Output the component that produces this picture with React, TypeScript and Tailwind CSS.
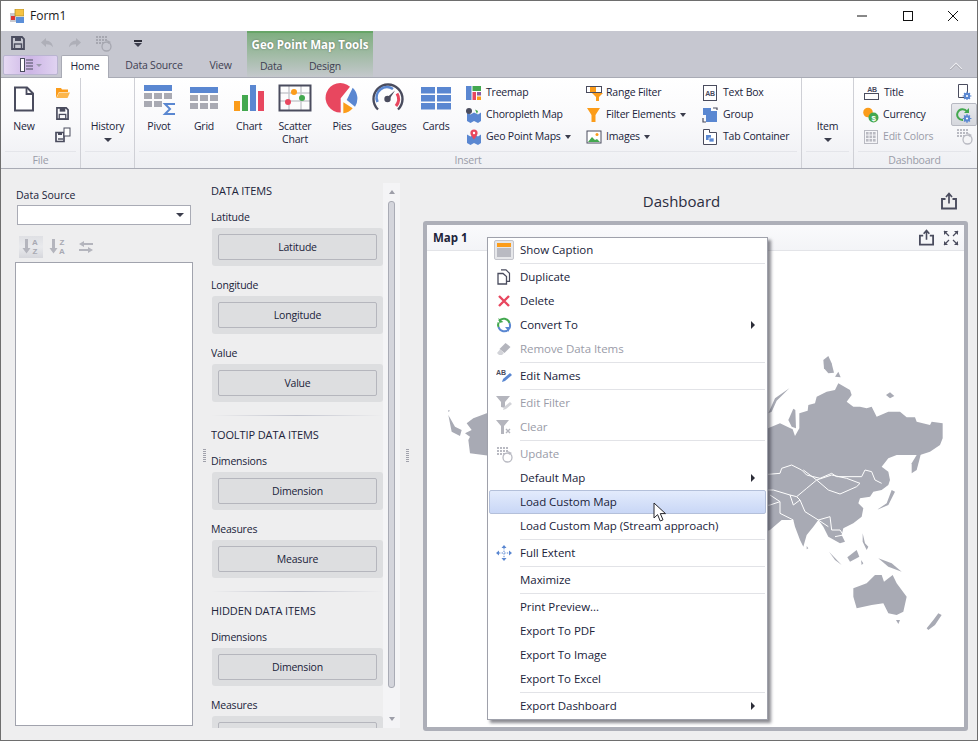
import React from "react";

const D = "#4a4c5e";
const BL = "#5a87d1";
const OR = "#fb9c1a";
const GR = "#43a84f";
const RD = "#e8475f";

type SP = { children: React.ReactNode; w?: number; h?: number; vb?: string; className?: string };
const S = ({ children, w = 16, h = 16, vb, className }: SP) => (
  <svg width={w} height={h} viewBox={vb ?? `0 0 ${w} ${h}`} className={"block shrink-0 " + (className ?? "")}>{children}</svg>
);

const Save = ({ c = D, s = 14 }: { c?: string; s?: number }) => (
  <S w={s} h={s} vb="0 0 14 14">
    <path d="M1 1h10l2 2v10H1z" fill="none" stroke={c} strokeWidth="1.8" />
    <rect x="4" y="1" width="6" height="4" fill={c} />
    <rect x="3.5" y="8" width="7" height="5" fill="none" stroke={c} strokeWidth="1.4" />
  </S>
);
const Update = ({ c = "#b9bac2", bg = "#f5f5f7" }: { c?: string; bg?: string }) => (
  <S w={17} h={17}>
    {[1, 4, 7, 10].map((x) => [1, 4, 7].map((y) => <rect key={x + "-" + y} x={x} y={y} width="2" height="2" fill={c} />))}
    <circle cx="11.5" cy="11.5" r="4.5" stroke={c} strokeWidth="1.3" fill={bg} />
    <path d="M12 5l4 2-3 2z" fill={c} />
  </S>
);
const Export = ({ s = 18 }: { s?: number }) => (
  <S w={s} h={s} vb="0 0 18 18">
    <path d="M5.5 7H2v9.5h14V7h-3.5" fill="none" stroke={D} strokeWidth="1.9" />
    <path d="M9 11.5V2.5M6 5l3-3.5L12 5" fill="none" stroke={D} strokeWidth="1.7" />
  </S>
);
const Gear = ({ x, y }: { x: number; y: number }) => (
  <g>
    <circle cx={x} cy={y} r="3.2" fill={BL} />
    <path d={`M${x - 4.4} ${y}h8.8M${x} ${y - 4.4}v8.8M${x - 3} ${y - 3}l6 6M${x - 3} ${y + 3}l6-6`} stroke={BL} strokeWidth="1.1" />
    <circle cx={x} cy={y} r="1.1" fill="#fff" />
  </g>
);
const MapFold = ({ c = BL }: { c?: string }) => (
  <path d="M1 5.5l3.5 2 3.5-2 4 2 3-2V14l-3 2-4-2-3.5 2L1 14z" fill={c} />
);

const big: Record<string, React.ReactNode> = {
  Pivot: (
    <S w={36} h={32}>
      <rect x="3" y="2" width="28" height="6" fill={BL} />
      {[3, 13, 23].map((x) => <rect key={x} x={x} y="10" width="8" height="6" fill="#a9aab3" />)}
      {[3, 13].map((x) => <rect key={x} x={x} y="18" width="8" height="6" fill="#a9aab3" />)}
      <path d="M34 21H24l5 5-5 5h10" fill="none" stroke={BL} strokeWidth="2" />
    </S>
  ),
  Grid: (
    <S w={36} h={32}>
      <rect x="4" y="4" width="28" height="6" fill={BL} />
      {[4, 14, 24].map((x) => [12, 20].map((y) => <rect key={x + "" + y} x={x} y={y} width="8" height="6" fill="#a9aab3" />))}
    </S>
  ),
  Chart: (
    <S w={36} h={32}>
      <rect x="3" y="18" width="6" height="10" fill={OR} />
      <rect x="11" y="12" width="6" height="16" fill={GR} />
      <rect x="19" y="2" width="6" height="26" fill={BL} />
      <rect x="27" y="8" width="6" height="20" fill={RD} />
    </S>
  ),
  Scatter: (
    <S w={36} h={32}>
      <path d="M3 10h30M3 18h30M12 3v24M24 3v24" stroke="#c9cad0" strokeWidth="1.5" />
      <rect x="2.5" y="2.5" width="31" height="25" fill="none" stroke={D} strokeWidth="2" />
      <circle cx="17" cy="9" r="3" fill={OR} />
      <circle cx="25" cy="15" r="3" fill={GR} />
      <circle cx="11" cy="19" r="3" fill={RD} />
    </S>
  ),
  Pies: (
    <S w={36} h={32}>
      <path d="M16.7 15.3L26 3.7A14.7 14.7 0 1 0 16.7 29.4Z" fill={RD} />
      <path d="M22.7 17L28.7 4.7A15 15 0 0 1 31 23.7Z" fill={BL} />
      <path d="M19.3 19.3L28.7 25.3A15 15 0 0 1 19.3 30.3Z" fill={OR} />
    </S>
  ),
  Gauges: (
    <S w={36} h={32}>
      <path d="M7 26.5A14.5 14.5 0 1 1 27 26.5" fill="none" stroke={D} strokeWidth="2.4" />
      <path d="M6.5 19A10.5 10.5 0 0 1 22 6" fill="none" stroke={BL} strokeWidth="2.6" />
      <path d="M26 10.5A11 11 0 0 1 25 23" fill="none" stroke={RD} strokeWidth="3" />
      <circle cx="16.5" cy="16" r="3.2" fill={D} />
      <path d="M15.5 15L24 7.5 18 17z" fill={D} />
    </S>
  ),
  Cards: (
    <S w={36} h={32}>
      {[3, 19].map((x) => [4, 12, 20].map((y) => <rect key={x + "" + y} x={x} y={y} width="14" height="6.5" fill={BL} />))}
    </S>
  ),
};

const small: Record<string, React.ReactNode> = {
  Treemap: (
    <S>
      <rect x="0" y="1" width="5.5" height="14" fill={BL} />
      <rect x="6.5" y="1" width="8.5" height="5" fill={GR} />
      <rect x="6.5" y="7" width="3.5" height="8" fill={RD} />
      <rect x="11" y="7" width="4" height="3.5" fill="#8b5c9c" />
      <rect x="11" y="11.5" width="4" height="3.5" fill={OR} />
    </S>
  ),
  Choropleth: (
    <S>
      <MapFold />
      <circle cx="3" cy="4" r="3" fill={D} />
      <path d="M9 2.5l3 1.5-1 3z" fill={GR} />
    </S>
  ),
  Geo: (
    <S>
      <MapFold />
      <path d="M8 0.5a3.6 3.6 0 0 1 3.6 3.6C11.6 6.5 8 10.5 8 10.5S4.4 6.5 4.4 4.1A3.6 3.6 0 0 1 8 .5z" fill={RD} />
      <circle cx="8" cy="4" r="1.2" fill="#fff" />
    </S>
  ),
  Range: (
    <S w={17}>
      <rect x="0.5" y="1.5" width="15" height="6" fill="#fff" stroke={D} />
      <rect x="4" y="2" width="6" height="5" fill={OR} />
      <path d="M6 8h11l-4 4v4h-3v-4z" fill={OR} />
    </S>
  ),
  FilterEl: (
    <S>
      <path d="M1 1h13L9.5 8v7h-4V8z" fill={OR} />
    </S>
  ),
  Images: (
    <S>
      <rect x="1" y="2" width="14" height="12" fill="#fff" stroke={D} />
      <path d="M2 13l4-5 3 3 2-1 3 3z" fill={GR} />
      <circle cx="11" cy="5.5" r="1.5" fill={OR} />
    </S>
  ),
  TextBox: (
    <S>
      <rect x="1.5" y="0.5" width="13" height="15" fill="#fff" stroke={D} />
      <text x="8" y="10.5" fontSize="7" fontWeight="700" textAnchor="middle" fill={D} fontFamily="Liberation Sans, sans-serif">AB</text>
    </S>
  ),
  Group: (
    <S>
      <rect x="4" y="4" width="11" height="11" fill={BL} />
      <rect x="1" y="1" width="8" height="7" fill={BL} />
      <path d="M11 1h4v2M1 11v4h3" fill="none" stroke={D} strokeWidth="1.2" />
    </S>
  ),
  TabC: (
    <S>
      <path d="M1.5 15.5V.5h6v3h7v12z" fill="#fff" stroke={D} />
      <rect x="4" y="6" width="5" height="5" fill={BL} />
      <rect x="7" y="9" width="5" height="4" fill={BL} stroke="#fff" strokeWidth=".7" />
    </S>
  ),
  Title: (
    <S w={18}>
      <text x="9" y="6.5" fontSize="7" fontWeight="700" textAnchor="middle" fill={D} fontFamily="Liberation Sans, sans-serif">AB</text>
      <rect x="1.5" y="8.5" width="14" height="6" fill="none" stroke={D} />
    </S>
  ),
  Currency: (
    <S>
      <circle cx="5" cy="5.5" r="4.8" fill={OR} />
      <circle cx="10.5" cy="10.5" r="5" fill={GR} />
      <text x="10.5" y="13.5" fontSize="8" fontWeight="700" textAnchor="middle" fill="#fff" fontFamily="Liberation Sans, sans-serif">$</text>
    </S>
  ),
  EditColors: (
    <S>
      <rect x="1.5" y="1.5" width="13" height="13" fill="none" stroke="#b9bac2" />
      {[3, 6.5, 10].map((x) => [3, 6.5, 10].map((y) => <rect key={x + "" + y} x={x} y={y} width="2.6" height="2.6" fill="#b9bac2" />))}
    </S>
  ),
};

const menuIcons: Record<string, React.ReactNode> = {
  Duplicate: (
    <S>
      <path d="M5 .8h5l3.5 3.5v8H11" fill="none" stroke={D} strokeWidth="1.2" />
      <path d="M2 4.5h5l3.5 3v7.5H2z" fill="#fff" stroke={D} strokeWidth="1.3" />
    </S>
  ),
  Delete: (
    <S>
      <path d="M3 3l10 10M13 3L3 13" stroke={RD} strokeWidth="2.4" />
    </S>
  ),
  Convert: (
    <S>
      <path d="M13.5 6A6 6 0 0 0 3 4" fill="none" stroke={GR} strokeWidth="2" />
      <path d="M3 1v5h4z" fill={GR} transform="rotate(-12 3 4)" />
      <path d="M2.5 10A6 6 0 0 0 13 12" fill="none" stroke={BL} strokeWidth="2" />
      <path d="M13 15v-5H9z" fill={BL} />
      <path d="M2.6 5.5A6 6 0 0 0 2.5 10" fill="none" stroke={GR} strokeWidth="2" />
      <path d="M13.4 6A6 6 0 0 1 13 12" fill="none" stroke={BL} strokeWidth="2" />
    </S>
  ),
  Remove: (
    <S>
      <path d="M9.5 2l5 4-6 6-5-4z" fill="#b4b5bd" />
      <path d="M4 8.5l4 3.5-2 2H3l-2-2z" fill="#d2d3d8" />
    </S>
  ),
  Names: (
    <S>
      <text x="0" y="7" fontSize="7" fontWeight="700" fill={D} fontFamily="Liberation Sans, sans-serif">AB</text>
      <path d="M6 14l1-3 7-6 2 2-7 6z" fill={BL} />
    </S>
  ),
  EditFilter: (
    <S>
      <path d="M0 1h14L9 7v6l-4-1V7z" fill="#b4b5bd" />
      <path d="M7 15l1-3 6-5 2 2-6 5z" fill="#d2d3d8" />
    </S>
  ),
  Clear: (
    <S>
      <path d="M0 1h13L8 7v8H5V7z" fill="#b4b5bd" />
      <path d="M10 10l4 4M14 10l-4 4" stroke="#b4b5bd" strokeWidth="1.4" />
    </S>
  ),
  Update: <Update bg="#fff" />,
  Full: (
    <S>
      <path d="M8 0l2.5 3h-5zM8 16l2.5-3h-5zM0 8l3-2.5v5zM16 8l-3-2.5v5z" fill={BL} />
      <path d="M8 3v10M3 8h10" stroke={BL} strokeWidth="1" strokeDasharray="1.4 1.2" />
    </S>
  ),
};

const NARROW = "text-[10.5px] tracking-[-0.2px]";

const Cap = ({ children, disabled }: { children: React.ReactNode; disabled?: boolean }) => (
  <span className={disabled ? "text-[#9a9ca8]" : "text-[#20233a]"}>{children}</span>
);

const Arrow = ({ className = "" }: { className?: string }) => (
  <span className={"inline-block w-0 h-0 border-l-[4px] border-r-[4px] border-t-[4px] border-l-transparent border-r-transparent border-t-[#3b3d4c] " + className} />
);

const Group = ({ width, caption, children, last }: { width: number; caption: string; children: React.ReactNode; last?: boolean }) => (
  <div style={{ width }} className={"shrink-0 flex flex-col " + (last ? "" : "border-r border-[#cfd0d6]")}>
    <div className="flex h-[73px]">{children}</div>
    <div className="mx-1 h-px bg-[#e4e5ea]" />
    <div className="flex-1 flex items-center justify-center text-[#9a9ca8] leading-none">{caption}</div>
  </div>
);

const BigBtn = ({ w, name, label }: { w: number; name: string; label: React.ReactNode }) => (
  <div style={{ width: w }} className="shrink-0 flex flex-col items-center pt-[5px]">
    {big[name]}
    <div className="mt-[5px] text-center leading-[13px] text-[#20233a]">{label}</div>
  </div>
);

const DropBtn = ({ label }: { label: string }) => (
  <div className="flex-1 flex flex-col items-center pt-[41px]">
    <div className="leading-[14px] text-[#20233a]">{label}</div>
    <Arrow className="mt-[5px]" />
  </div>
);

const Small = ({ icon, label, gap = 5, drop, disabled }: { icon: React.ReactNode; label: string; gap?: number; drop?: boolean; disabled?: boolean }) => (
  <div className="h-[22px] flex items-center whitespace-nowrap" style={{ gap }}>
    {icon}
    <Cap disabled={disabled}>{label}</Cap>
    {drop && (
      <span className="inline-block w-0 h-0 border-l-[3.5px] border-r-[3.5px] border-t-[4px] border-l-transparent border-r-transparent border-t-[#3b3d4c]" />
    )}
  </div>
);

const SmallCol = ({ w, ml = 0, children }: { w: number; ml?: number; children: React.ReactNode }) => (
  <div style={{ width: w, marginLeft: ml }} className="shrink-0 pt-[4px] flex flex-col">{children}</div>
);

const Tab = ({ children, w }: { children: React.ReactNode; w: number }) => (
  <div style={{ width: w }} className={"shrink-0 h-full flex items-center justify-center text-[#3f4153] whitespace-nowrap " + NARROW}>{children}</div>
);

const Header = () => (
  <div className="h-[47px] bg-[#c6c7d0] flex shrink-0 border-b border-[#a9abb5]">
    <div className="w-[246px] shrink-0 flex flex-col">
      <div className="h-[25px] flex items-center pl-[10px]">
        <Save />
        <S w={14} h={12} vb="0 0 14 12" className="ml-[15px]"><path d="M6 1L1 5.5 6 10V7.3c3 0 5 .6 7 3-.5-4-3-6.5-7-6.7z" fill="#aeafb8" /></S>
        <S w={14} h={12} vb="0 0 14 12" className="ml-[14px]"><path d="M8 1l5 4.5L8 10V7.3c-3 0-5 .6-7 3 .5-4 3-6.5 7-6.7z" fill="#aeafb8" /></S>
        <div className="ml-[13px]"><Update c="#a6a7b0" bg="#c6c7d0" /></div>
        <div className="ml-[22px] flex flex-col items-center gap-[1px]">
          <div className="w-[8px] h-[2px] bg-[#2c2d38]" />
          <Arrow />
        </div>
      </div>
      <div className="flex-1 flex items-start">
        <div className="ml-[2px] w-[55px] h-[20px] rounded-[2px] border border-[#b9b4d0] bg-gradient-to-r from-[#e6d9f3] via-[#cdb6e6] to-[#e0d3f1] flex items-center justify-center">
          <S w={14} h={14}>
            <rect x=".5" y=".5" width="4" height="13" fill="#fff" stroke={D} />
            <path d="M6 2h7M6 5h7M6 8h7M6 11h7" stroke={D} strokeWidth="1.2" />
          </S>
          <span className="ml-[2px] inline-block w-0 h-0 border-l-[3px] border-r-[3px] border-t-[3px] border-l-transparent border-r-transparent border-t-[#9c9aae]" />
        </div>
        <div className={"ml-[3px] w-[48px] h-[23px] -mb-px bg-white border border-b-0 border-[#a9abb5] rounded-t-[2px] flex items-center justify-center text-[#20233a] " + NARROW}>Home</div>
        <Tab w={90}>Data Source</Tab>
        <Tab w={43}>View</Tab>
      </div>
    </div>
    <div className="w-[126px] shrink-0 border-t-2 border-[#67a567] bg-gradient-to-b from-[#7fae80] to-[#c4c8cc] flex flex-col">
      <div className="h-[23px] flex items-center justify-center text-white font-bold whitespace-nowrap [text-shadow:0_0_2px_#5b6b5b]">Geo Point Map Tools</div>
      <div className="flex-1 flex">
        <Tab w={48}>Data</Tab>
        <Tab w={60}>Design</Tab>
      </div>
    </div>
    <div className="flex-1 flex justify-end items-end pr-[14px] pb-[6px]">
      <S w={14} h={9}>
        <path d="M1.5 7.5L7 2l5.5 5.5" fill="none" stroke="#f2f2f5" strokeWidth="2" />
        <path d="M1.5 8L7 2.5 12.5 8" fill="none" stroke="#6a6b78" strokeWidth=".8" />
      </S>
    </div>
  </div>
);

const Ribbon = () => (
  <div className={"h-[91px] shrink-0 flex bg-gradient-to-b from-white via-[#f9f9fb] to-[#eeeff3] border-b border-[#a9abb5] " + NARROW}>
    <Group width={80} caption="File">
      <div className="w-[46px] flex flex-col items-center pt-[8px]">
        <S w={22} h={26}>
          <path d="M2 1.5h12l6 6v17H2z" fill="#fff" stroke={D} strokeWidth="2" />
          <path d="M13.5 1.5v6.5h6.5" fill="none" stroke={D} strokeWidth="1.8" />
        </S>
        <div className="mt-[7px] leading-[14px] text-[#20233a]">New</div>
      </div>
      <div className="flex flex-col items-center pl-[7px] w-[24px]">
        <S w={16} h={12} className="mt-[9px]">
          <path d="M1 1h5l1 1.5h6V5H4L1 11z" fill={OR} />
          <path d="M4 5.5h11L12.5 11H1.5z" fill="#fcb64c" />
        </S>
        <div className="mt-[8px]"><Save s={13} /></div>
        <S w={16} h={16} className="mt-[7px]">
          <path d="M1 5.5h8v9H1z" fill="none" stroke={D} strokeWidth="1.7" />
          <rect x="3" y="5" width="4" height="3" fill={D} />
          <rect x="9" y="1" width="6" height="8" fill="#fff" stroke={D} />
          <path d="M3 12h5" stroke={D} strokeWidth="1.4" />
        </S>
      </div>
    </Group>
    <Group width={54} caption="">
      <DropBtn label="History" />
    </Group>
    <Group width={667} caption="Insert">
      <div className="w-[2px]" />
      <BigBtn w={44} name="Pivot" label="Pivot" />
      <BigBtn w={46} name="Grid" label="Grid" />
      <BigBtn w={44} name="Chart" label="Chart" />
      <BigBtn w={48} name="Scatter" label={<>Scatter<br />Chart</>} />
      <BigBtn w={46} name="Pies" label="Pies" />
      <BigBtn w={48} name="Gauges" label="Gauges" />
      <BigBtn w={46} name="Cards" label="Cards" />
      <SmallCol w={120} ml={7}>
        <Small icon={small.Treemap} label="Treemap" gap={4} />
        <Small icon={small.Choropleth} label="Choropleth Map" gap={4} />
        <Small icon={small.Geo} label="Geo Point Maps" gap={4} drop />
      </SmallCol>
      <SmallCol w={116}>
        <Small icon={small.Range} label="Range Filter" gap={3} />
        <Small icon={small.FilterEl} label="Filter Elements" gap={4} drop />
        <Small icon={small.Images} label="Images" gap={4} drop />
      </SmallCol>
      <SmallCol w={90}>
        <Small icon={small.TextBox} label="Text Box" gap={5} />
        <Small icon={small.Group} label="Group" gap={5} />
        <Small icon={small.TabC} label="Tab Container" gap={5} />
      </SmallCol>
    </Group>
    <Group width={52} caption="">
      <DropBtn label="Item" />
    </Group>
    <Group width={121} caption="Dashboard" last>
      <SmallCol w={89} ml={9}>
        <Small icon={small.Title} label="Title" gap={3} />
        <Small icon={small.Currency} label="Currency" gap={4} />
        <Small icon={small.EditColors} label="Edit Colors" gap={4} disabled />
      </SmallCol>
      <div className="w-[26px] ml-[-1px] pt-[3px] flex flex-col items-center">
        <div className="h-[22px] flex items-center">
          <S>
            <path d="M2.5.5h9v13h-9z" fill="#fff" stroke={D} />
            <Gear x={11} y={12} />
          </S>
        </div>
        <div className="h-[23px] w-[26px] rounded-[2px] border border-[#b7b9c2] bg-gradient-to-b from-[#e8e9ed] to-[#d5d7dd] flex items-center justify-center">
          <S>
            <path d="M11 4.5A5.4 5.4 0 1 0 7 13" fill="none" stroke={GR} strokeWidth="2" />
            <path d="M13 1v5H8z" fill={GR} />
            <Gear x={11} y={11.5} />
          </S>
        </div>
        <div className="h-[21px] flex items-center"><Update /></div>
      </div>
    </Group>
  </div>
);

const Splitter = ({ w }: { w: number }) => (
  <div style={{ width: w }} className="shrink-0 flex items-start justify-center pt-[279px]">
    <div className="w-[3px] h-[14px] bg-[repeating-linear-gradient(0deg,#a0a1ab_0,#a0a1ab_1px,transparent_1px,transparent_2px)]" />
  </div>
);

const SortIcon = ({ top, bottom }: { top: string; bottom: string }) => (
  <S w={18} h={18}>
    <path d="M3 1h3v9h2.5L4.5 15.5.5 10H3z" fill="#b4b5bd" />
    <text x="13" y="7" fontSize="8" fontWeight="700" textAnchor="middle" fill="#a8a9b2" fontFamily="Liberation Sans, sans-serif">{top}</text>
    <text x="13" y="16" fontSize="8" fontWeight="700" textAnchor="middle" fill="#a8a9b2" fontFamily="Liberation Sans, sans-serif">{bottom}</text>
  </S>
);

const LeftPane = () => (
  <div className="w-[196px] shrink-0 flex flex-col pt-[19px] pl-[14px] text-[10.5px]">
    <div className="h-[14px] leading-[14px] pl-[1px] text-[#20233a]">Data Source</div>
    <div className="mt-[3px] ml-[2px] w-[174px] h-[20px] bg-white border border-[#a9abb5] flex items-center justify-end pr-[6px]">
      <Arrow />
    </div>
    <div className="mt-[11px] ml-[4px] h-[22px] flex items-center">
      <div className="w-[24px] h-[22px] bg-gradient-to-b from-[#dfe0e4] via-[#e9eaed] to-[#d6d7dc] flex items-center justify-center">
        <SortIcon top="A" bottom="Z" />
      </div>
      <div className="ml-[6px]"><SortIcon top="Z" bottom="A" /></div>
      <S w={16} h={14} className="ml-[11px]">
        <path d="M6 1L1 4l5 3V5h9V3H6zM10 7l5 3-5 3v-2H1V9h9z" fill="#b4b5bd" />
      </S>
    </div>
    <div className="mt-[4px] w-[178px] h-[464px] bg-white border border-[#a1a3ad]" />
  </div>
);

const Slot = ({ label, btn }: { label: string; btn?: string }) => (
  <div className="mb-[8px]">
    <div className="h-[22px] pt-[1px] flex items-center text-[#20233a]">{label}</div>
    <div className="h-[38px] rounded-[3px] bg-[#dddee0] ml-[1px] p-[6px]">
      <div className="h-[26px] pt-[1px] rounded-[2px] border border-[#b5b6bd] flex items-center justify-center text-[#20233a]">{btn}</div>
    </div>
  </div>
);

const SectionHead = ({ children, sep }: { children: string; sep?: boolean }) => (
  <>
    {sep && <div className="mt-[13px] mb-[8px] h-px bg-gradient-to-r from-transparent via-[#c3c5cf] to-transparent" />}
    <div className="h-[22px] mb-[4px] flex items-center text-[#20233a] text-[11px] tracking-[-0.1px]">{children}</div>
  </>
);

const Items = () => (
  <div className={"w-[172px] shrink-0 pt-[11px] h-[559px] overflow-hidden " + NARROW}>
    <SectionHead>DATA ITEMS</SectionHead>
    <Slot label="Latitude" btn="Latitude" />
    <Slot label="Longitude" btn="Longitude" />
    <Slot label="Value" btn="Value" />
    <SectionHead sep>TOOLTIP DATA ITEMS</SectionHead>
    <Slot label="Dimensions" btn="Dimension" />
    <Slot label="Measures" btn="Measure" />
    <SectionHead sep>HIDDEN DATA ITEMS</SectionHead>
    <Slot label="Dimensions" btn="Dimension" />
    <Slot label="Measures" />
  </div>
);

const Scroll = () => (
  <div className="mt-[14px] h-[545px] w-[17px] shrink-0 bg-[#f4f4f6] flex flex-col items-center">
    <span className="mt-[7px] inline-block w-0 h-0 border-l-[3.5px] border-r-[3.5px] border-b-[4px] border-l-transparent border-r-transparent border-b-[#9d9ea8]" />
    <div className="mt-[7px] w-[7px] h-[487px] rounded-[3px] bg-[#d4d5dc] border border-[#a9abb5]" />
    <span className="mt-[29px] inline-block w-0 h-0 border-l-[3.5px] border-r-[3.5px] border-t-[4px] border-l-transparent border-r-transparent border-t-[#9d9ea8]" />
  </div>
);

const MAP_MAIN =
  "M0 745L24 745 60 730 85 742 98 748 105 768 118 745 118 700 143 692 145 675 165 670 170 650 200 635 225 630 235 610 270 630 275 645 260 665 280 680 300 680 320 685 335 680 350 710 385 695 420 695 440 712 465 712 470 725 510 735 515 725 548 730 548 775 540 795 510 815 480 825 450 825 410 825 385 835 365 860 385 875 390 900 385 915 365 930 340 935 330 950 300 955 295 970 310 985 305 1010 280 1030 250 1045 245 1065 255 1085 240 1090 205 1070 190 1040 175 1020 160 1040 140 1065 130 1100 120 1080 105 1040 100 1020 65 1020 30 1050 0 1060Z";
const MAP_ISLANDS = [
  "M190 540L205 528 215 550 222 578 205 580 192 565Z",
  "M225 590L235 575 242 592Z",
  "M378 645L390 637 403 648 390 655Z",
  "M25 700L45 655 88 625 50 662 35 695Z",
  "M85 720L100 686 106 690 108 745 95 740Z",
  "M455 850L470 825 488 800 478 840 470 870 455 880Z",
  "M350 990L380 970 395 930 405 935 385 975Z",
  "M207 1115L245 1155 225 1140Z",
  "M262 1132L290 1110 298 1130 270 1145Z",
  "M355 1135L395 1150 425 1175 385 1160Z",
  "M280 1225L320 1210 345 1185 365 1185 372 1205 398 1185 410 1210 440 1250 430 1295 410 1305 385 1300 370 1270 335 1275 290 1285 280 1250Z",
  "M408 1320L420 1320 415 1332Z",
  "M500 1345L520 1320 535 1300 545 1305 525 1335 505 1350Z",
  "M140 1098L145 1105 140 1108Z",
  "M308 1060L315 1090 325 1100 320 1110 308 1085Z",
  "M303 1140L310 1150 305 1155Z",
  "M-935 705L-915 740 -895 750 -900 768 -925 755Z",
  "M-935 690L-930 692 -935 696Z",
  "M-880 730L-860 715 -820 700 -790 700 -790 830 -870 820 -875 780 -870 770 -885 760 -865 750Z",
];
const MAP_BORDERS = [
  "M0 885L60 880 65 865 95 855 125 870 140 885 180 895 215 880 230 890 270 890 305 890 315 870 335 875 345 900 365 910",
  "M130 870L170 900 205 930 240 942 290 920 300 910 260 895 215 885 170 900 140 925 110 950 90 945 40 930 0 930",
  "M110 950L120 960 135 995 175 1020 210 1010 215 1050 240 1050",
  "M30 945L60 965 60 1000 90 1015 100 1020",
  "M0 980L30 975 60 965M90 945L100 975 120 960",
  "M175 1020L205 1040M240 1050L250 1065 225 1070",
];

const MapDrawing = () => (
  <svg className="absolute left-0 top-0" width="537" height="502" viewBox="-999 135 1611 1506">
    <path d={MAP_MAIN} fill="#a8aab4" />
    {MAP_ISLANDS.map((d) => <path key={d} d={d} fill="#a8aab4" />)}
    {MAP_BORDERS.map((d) => <path key={d} d={d} fill="none" stroke="#fff" strokeWidth="3" />)}
  </svg>
);

type Row = { t: string; i?: string; d?: boolean; sub?: boolean; hover?: boolean; check?: boolean } | "sep";
const rows: Row[] = [
  { t: "Show Caption", check: true },
  "sep",
  { t: "Duplicate", i: "Duplicate" },
  { t: "Delete", i: "Delete" },
  { t: "Convert To", i: "Convert", sub: true },
  { t: "Remove Data Items", i: "Remove", d: true },
  "sep",
  { t: "Edit Names", i: "Names" },
  "sep",
  { t: "Edit Filter", i: "EditFilter", d: true },
  { t: "Clear", i: "Clear", d: true },
  "sep",
  { t: "Update", i: "Update", d: true },
  { t: "Default Map", sub: true },
  { t: "Load Custom Map", hover: true },
  { t: "Load Custom Map (Stream approach)" },
  "sep",
  { t: "Full Extent", i: "Full" },
  "sep",
  { t: "Maximize" },
  "sep",
  { t: "Print Preview..." },
  { t: "Export To PDF" },
  { t: "Export To Image" },
  { t: "Export To Excel" },
  "sep",
  { t: "Export Dashboard", sub: true },
];

const Menu = () => (
  <div className="absolute left-[60px] top-[12px] w-[281px] bg-white border border-[#9fa1ab] shadow-[3px_3px_3px_rgba(60,60,70,0.6)] pb-[1px] tracking-[-0.05px]">
    {rows.map((r, idx) =>
      r === "sep" ? (
        <div key={idx} className="h-[3px] flex items-center pl-[32px] pr-[2px]">
          <div className="h-px w-full bg-[#e2e3e7]" />
        </div>
      ) : (
        <div
          key={idx}
          className={
            "relative h-[24px] flex items-center whitespace-nowrap " +
            (r.hover ? "mx-[1px] rounded-[2px] border border-[#b4c0da] bg-gradient-to-b from-[#e3ebfc] to-[#c9d7f6]" : "")
          }
        >
          <div className={"w-[32px] shrink-0 flex items-center justify-center " + (r.hover ? "-ml-[2px]" : "")}>
            {r.check && (
              <div className="w-[20px] h-[20px] rounded-[2px] border border-[#c4c5cc] bg-[#e6e7ea] flex flex-col items-center justify-center">
                <div className="w-[14px] h-[4px] bg-[#fb9c1a]" />
                <div className="mt-[1px] w-[14px] h-[9px] bg-[#b9bac2]" />
              </div>
            )}
            {r.i && menuIcons[r.i]}
          </div>
          <Cap disabled={r.d}>{r.t}</Cap>
          {r.sub && (
            <span className="absolute right-[12px] inline-block w-0 h-0 border-t-[4px] border-b-[4px] border-l-[4px] border-t-transparent border-b-transparent border-l-[#2c2d38]" />
          )}
        </div>
      )
    )}
    <svg width="15" height="21" viewBox="0 0 15 21" className="absolute left-[165px] top-[264px]">
      <path d="M1 1v15l3.6-3.4 2.6 6.4 2.8-1.2-2.7-6.2H12.5z" fill="#fff" stroke="#26262c" strokeWidth="1" />
    </svg>
  </div>
);

const Dashboard = () => (
  <div className="flex-1 min-w-0 flex flex-col pl-[8px]">
    <div className="h-[52px] shrink-0 flex items-center w-[545px] pt-[12px]">
      <div className="flex-1 text-center text-[15px] text-[#2b2d40]">Dashboard</div>
      <div className="w-[28px]"><Export /></div>
    </div>
    <div className="w-[545px] h-[510px] rounded-[3px] border-[4px] border-[#adafb8] bg-white flex flex-col relative">
      <div className="h-[26px] shrink-0 border-b border-[#e3e4e8] bg-gradient-to-b from-[#fafafc] to-[#f3f4f7] flex items-center pl-[6px] pr-[5px]">
        <div className="font-bold text-[#20233a] flex-1">Map 1</div>
        <div className="mr-[8px]"><Export s={17} /></div>
        <S w={16} h={16}>
          <path d="M1 1h4L1 5zM15 1h-4l4 4zM1 15h4l-4-4zM15 15h-4l4-4z" fill={D} />
          <path d="M1 1l5 5M15 1l-5 5M1 15l5-5M15 15l-5-5" stroke={D} strokeWidth="1.2" />
        </S>
      </div>
      <MapDrawing />
      <Menu />
    </div>
  </div>
);

export default function App() {
  return (
    <div className="w-[978px] h-[741px] overflow-hidden border border-[#6e6e6e] bg-[#eeeeef] flex flex-col text-[11.5px] font-['Open_Sans',sans-serif]">
      <div className="h-[30px] shrink-0 bg-white flex items-center pl-[9px] text-[12px] text-[#1a1a1a]">
        <S w={14} h={15}>
          <rect x="0" y="4" width="6" height="9" fill="#c9c9cf" />
          <rect x="1" y="7" width="4" height="4" fill="#d33" />
          <rect x="5" y="0" width="9" height="7" fill="#f5c242" stroke="#a98a2c" strokeWidth=".7" />
          <rect x="6" y="8" width="8" height="6" fill="#5b8fd8" />
        </S>
        <span className="ml-[6px]">Form1</span>
        <div className="ml-auto flex items-center pr-[18px]">
          <svg width="12" height="12" viewBox="0 0 12 12" className="block"><path d="M1 6h10" stroke="#111" /></svg>
          <svg width="12" height="12" viewBox="0 0 12 12" className="block ml-[34px]"><rect x="1.5" y="1.5" width="9" height="9" fill="none" stroke="#111" /></svg>
          <svg width="12" height="12" viewBox="0 0 12 12" className="block ml-[33px]"><path d="M1 1l10 10M11 1L1 11" stroke="#111" /></svg>
        </div>
      </div>
      <Header />
      <Ribbon />
      <div className="flex-1 min-h-0 flex">
        <LeftPane />
        <Splitter w={14} />
        <Items />
        <Scroll />
        <Splitter w={15} />
        <Dashboard />
      </div>
    </div>
  );
}
